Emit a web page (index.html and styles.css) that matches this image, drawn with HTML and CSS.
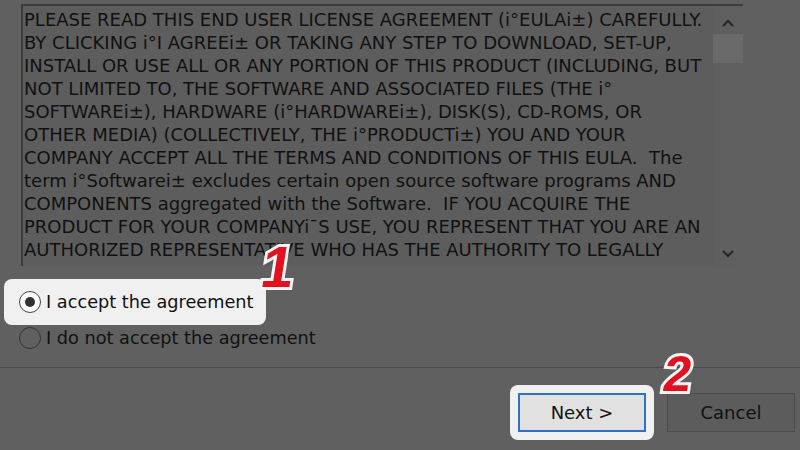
FILE: index.html
```html
<!DOCTYPE html>
<html lang="en">
  <head>
    <meta charset="UTF-8" />
    <title>License Agreement</title>
    <link rel="stylesheet" href="styles.css">
  </head>
  <body>
    <div class="eula">
      <div class="eula-text">
        PLEASE READ THIS END USER LICENSE AGREEMENT (i°EULAi±) CAREFULLY.<br>
        BY CLICKING i°I AGREEi± OR TAKING ANY STEP TO DOWNLOAD, SET-UP,<br>
        INSTALL OR USE ALL OR ANY PORTION OF THIS PRODUCT (INCLUDING, BUT<br>
        NOT LIMITED TO, THE SOFTWARE AND ASSOCIATED FILES (THE i°<br>
        SOFTWAREi±), HARDWARE (i°HARDWAREi±), DISK(S), CD-ROMS, OR<br>
        OTHER MEDIA) (COLLECTIVELY, THE i°PRODUCTi±) YOU AND YOUR<br>
        COMPANY ACCEPT ALL THE TERMS AND CONDITIONS OF THIS EULA.&nbsp; The<br>
        term i°Softwarei± excludes certain open source software programs AND<br>
        COMPONENTS aggregated with the Software.&nbsp; IF YOU ACQUIRE THE<br>
        PRODUCT FOR YOUR COMPANYi¯S USE, YOU REPRESENT THAT YOU ARE AN<br>
        AUTHORIZED REPRESENTATIVE WHO HAS THE AUTHORITY TO LEGALLY
      </div>
      <div class="scrollbar">
        <svg class="arrow" width="14" height="10" viewBox="0 0 14 10"><path d="M2 7 L7 2 L12 7" fill="none" stroke="#262626" stroke-width="2"/></svg>
        <div class="thumb"></div>
        <div class="track"></div>
        <svg class="arrow" width="14" height="10" viewBox="0 0 14 10"><path d="M2 3 L7 8 L12 3" fill="none" stroke="#262626" stroke-width="2"/></svg>
      </div>
    </div>

    <div class="choices">
      <label class="choice focus">
        <span class="radio checked"></span>I accept the agreement
      </label>
      <label class="choice">
        <span class="radio"></span>I do not accept the agreement
      </label>
      <span class="step step-one">1</span>
    </div>

    <div class="footer">
      <div class="focus-box">
        <button class="btn btn-default">Next &gt;</button>
      </div>
      <button class="btn">Cancel</button>
      <span class="step step-two">2</span>
    </div>
  </body>
</html>
```

FILE: styles.css
```css
:root {
  --backdrop: #606060;
  --ink: #111;
  --highlight: #f0f0f0;
  --step-red: #e3101e;
}
html,
body {
  margin: 0;
  padding: 0;
  background-color: var(--backdrop);
  width: 800px;
  height: 450px;
  overflow: hidden;
}
body {
  font-family: "DejaVu Sans", sans-serif;
  color: var(--ink);
}
.eula {
  display: flex;
  margin: 4px 0 0 21px;
  width: 722px;
  height: 262px;
  background-color: #5d5d5d;
  border-top: 2px solid #3c3c3c;
  border-left: 2px solid #3c3c3c;
  box-sizing: border-box;
}
.eula-text {
  flex-grow: 1;
  padding: 2px 0 0 1px;
  font-size: 18px;
  line-height: 23px;
  white-space: nowrap;
  overflow: hidden;
}
.scrollbar {
  width: 30px;
  display: flex;
  flex-direction: column;
  align-items: center;
  background-color: #5f5f5f;
}
.arrow {
  margin: 13px 0 5px;
}
.thumb {
  align-self: stretch;
  height: 29px;
  background-color: #6a6a6a;
}
.track {
  flex-grow: 1;
}
.scrollbar .arrow:last-child {
  margin: 0 0 8px;
}
.choices {
  position: relative;
  padding: 13px 0 0 4px;
  height: 102px;
  box-sizing: border-box;
  border-bottom: 1px solid #4a4a4a;
}
.choice {
  display: flex;
  align-items: center;
  height: 46px;
  width: 262px;
  padding-left: 15px;
  box-sizing: border-box;
  font-size: 17.7px;
}
.choice + .choice {
  height: 26px;
  width: auto;
}
.focus {
  background-color: var(--highlight);
  border-radius: 8px;
}
.radio {
  width: 22px;
  height: 22px;
  border-radius: 50%;
  border: 1.5px solid #333;
  box-sizing: border-box;
  margin-right: 5px;
  display: inline-flex;
  align-items: center;
  justify-content: center;
}
.focus .radio {
  border-color: #444;
  background-color: #fff;
}
.radio.checked::after {
  content: "";
  width: 10px;
  height: 10px;
  border-radius: 50%;
  background-color: #333;
}
.footer {
  position: relative;
  display: flex;
  align-items: center;
  gap: 13px;
  padding: 17px 5px 0 510px;
}
.focus-box {
  padding: 8px;
  background-color: var(--highlight);
  border-radius: 8px;
}
.btn {
  width: 128px;
  height: 39px;
  font-family: "DejaVu Sans", sans-serif;
  font-size: 18px;
  color: var(--ink);
  background-color: #5c5c5c;
  border: 1px solid #4c4c4c;
  padding: 0;
}
.btn-default {
  display: block;
  background-color: #e1e1e1;
  border: 2px solid #2f72c4;
}
.step {
  position: absolute;
  font-family: "Liberation Sans", Arial, sans-serif;
  font-weight: bold;
  color: var(--step-red);
  -webkit-text-stroke: 6px #f4f4f4;
  paint-order: stroke fill;
  line-height: 1;
  transform: skewX(-9deg);
}
.step-one {
  left: 262px;
  top: -28px;
  font-size: 58px;
}
.step-two {
  left: 664px;
  top: -19px;
  font-size: 50px;
}
```
